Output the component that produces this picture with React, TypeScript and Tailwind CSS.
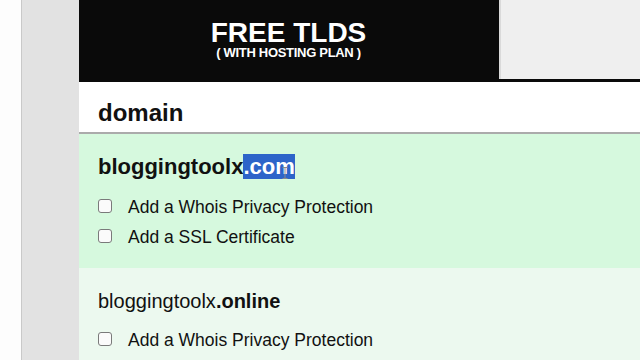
import React from "react";

function Box() {
  return (
    <div className="mt-[2px] w-[14px] h-[14px] shrink-0 rounded-[3px] border border-[#7a7a7a] bg-[#fbfbfb]" />
  );
}

function Row({ label }: { label: string }) {
  return (
    <div className="flex items-start h-[20px] leading-[20px] text-[17.5px] text-[#111]">
      <Box />
      <span className="ml-[16px] whitespace-nowrap">{label}</span>
    </div>
  );
}

export default function App() {
  return (
    <div
      className="w-[640px] h-[360px] overflow-hidden flex bg-white"
      style={{ fontFamily: '"Liberation Sans", Arial, sans-serif' }}
    >
      <div className="w-[22px] shrink-0 bg-[#fdfdfd] border-r border-[#c9c9c9]" />
      <div className="w-[57px] shrink-0 bg-[#e2e2e2]" />
      <div className="flex-1 flex flex-col min-w-0">
        <div className="h-[82px] shrink-0 flex bg-[#0a0a0a]">
          <div className="w-[419px] shrink-0 pt-[20px] text-center text-white font-bold">
            <div className="text-[28px] leading-[26px]">FREE TLDS</div>
            <div className="text-[13px] leading-[13px] tracking-[-0.3px]">( WITH HOSTING PLAN )</div>
          </div>
          <div className="flex-1 ml-[1px] mb-[3px] bg-[#efefef] border-l-2 border-[#dadada]" />
        </div>
        <div className="h-[52px] shrink-0 bg-white border-b-2 border-[#ababab] pl-[19px] pt-[19px]">
          <div className="text-[24px] leading-[24px] font-bold text-[#111]">domain</div>
        </div>
        <div className="h-[134px] shrink-0 bg-[#d6f9de] pl-[19px] pt-[21px]">
          <div className="relative text-[22px] leading-[24px] font-bold text-[#111] whitespace-nowrap">
            bloggingtoolx
            <span className="bg-[#2d64c9] text-white">.com</span>
            <svg className="absolute left-[184px] top-[12px]" width="6" height="12" viewBox="0 0 6 12">
              <path d="M0.5 0.5h5M3 0.5v11M0.5 11.5h5" stroke="#8a8a8a" strokeWidth="1" fill="none" />
            </svg>
          </div>
          <div className="mt-[18px]">
            <Row label="Add a Whois Privacy Protection" />
          </div>
          <div className="mt-[10px]">
            <Row label="Add a SSL Certificate" />
          </div>
        </div>
        <div className="flex-1 bg-[#ecf9ef] pl-[19px] pt-[22px]">
          <div className="text-[20px] leading-[22px] text-[#111] whitespace-nowrap">
            bloggingtoolx<span className="font-bold">.online</span>
          </div>
          <div className="mt-[18px]">
            <Row label="Add a Whois Privacy Protection" />
          </div>
        </div>
      </div>
    </div>
  );
}
